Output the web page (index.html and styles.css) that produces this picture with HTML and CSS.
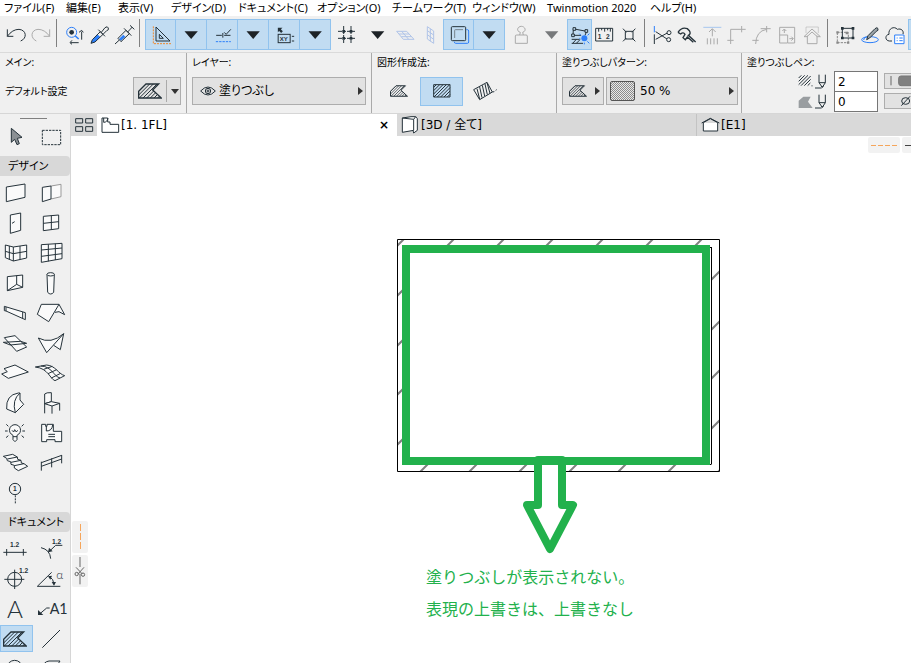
FILE: index.html
```html
<!DOCTYPE html>
<html lang="ja">
<head>
<meta charset="utf-8">
<meta name="viewport" content="width=device-width, initial-scale=1">
<title>[1. 1FL]</title>
<link rel="stylesheet" href="styles.css">
</head>
<body>
<svg class="sprite" aria-hidden="true">
  <clipPath id="fill-clip"><path d="M2 44V24L24 2H62L44 20 70 44z"/></clipPath>
  <symbol id="fill" viewBox="0 0 72 46">
    <path d="M2 44V24L24 2H62L44 20 70 44z" stroke-width="4"/>
    <path clip-path="url(#fill-clip)" stroke-width="3" d="M-20 46L26 0M-9 46L37 0M2 46L48 0M13 46L59 0M24 46L70 0M35 46L81 0M46 46L92 0M57 46L103 0"/>
  </symbol>
  <symbol id="down" viewBox="0 0 93 93"><path d="M27 37H67L47 60z" fill="currentColor" stroke="none"/></symbol>
  <symbol id="pen" viewBox="0 0 33 45"><path d="M12 2V26L22 40 31 26V2M12 26H31M0 42H20M19 36L22 40 25 36"/></symbol>
</svg>

<nav class="menu">
  <a href="#">ファイル(F)</a><a href="#">編集(E)</a><a href="#">表示(V)</a><a href="#">デザイン(D)</a><a href="#">ドキュメント(C)</a><a href="#">オプション(O)</a><a href="#">チームワーク(T)</a><a href="#">ウィンドウ(W)</a><a href="#">Twinmotion 2020</a><a href="#">ヘルプ(H)</a>
</nav>

<div class="toolbar">
  <button aria-label="元に戻す"><svg viewBox="0 0 75 93"><path d="M10 31V52H28M10 52Q25 31 45 31C68 33 70 58 50 66"/></svg></button>
  <button class="off" aria-label="やり直し"><svg viewBox="0 0 75 93"><path d="M62 31V52H44M62 52Q47 31 27 31C4 33 4 58 22 66"/></svg></button>
  <span class="sep"></span>
  <button aria-label="検索"><svg viewBox="0 0 75 93"><circle class="blue" cx="29" cy="40" r="15"/><circle class="solid" cx="29" cy="40" r="7"/><path class="blue" stroke-width="5" d="M40 51L50 60"/><path d="M59 62V38M51 40L59 34 64 40M50 71H26M30 64L24 71 30 76"/></svg></button>
  <button aria-label="ピックアップ"><svg viewBox="0 0 75 93"><path class="bluefill" d="M12 73L16 62 31 46 40 54 24 69z"/><path d="M12 73L16 62 40 38 48 46 24 69zM34 32L54 52M43 40L54 26Q62 20 64 27T59 35L48 46"/></svg></button>
  <button aria-label="注入"><svg viewBox="0 0 75 93"><path class="bluefill" d="M21 60L34 47 40 53 27 65z"/><path d="M9 75L21 64M18 58L42 34 52 44 27 68zM36 28L58 50M47 39L61 24M54 19L67 31"/></svg></button>
  <span class="sep"></span>
  <button class="wide on" aria-label="ガイドライン"><svg viewBox="0 0 93 93"><path d="M33 24V66H75zM43 46V58H55z"/><path class="orange" stroke-dasharray="6 3" d="M25 22V74H79"/></svg></button>
  <button class="wide on" aria-label="ガイドラインのオプション"><svg><use href="#down"/></svg></button>
  <button class="wide on" aria-label="スナップガイド"><svg viewBox="0 0 93 93"><path d="M29 49H46M53 49H72M49 42V56M53 40L59 46 73 31"/><path class="blue" stroke-dasharray="7 3" d="M28 68H73"/></svg></button>
  <button class="wide on" aria-label="スナップのオプション"><svg><use href="#down"/></svg></button>
  <button class="wide on" aria-label="座標"><svg viewBox="0 0 93 93"><path class="solid" d="M28 26H42L37 31 43 37 38 42 32 36 28 40z"/><rect x="29" y="46" width="36" height="25"/><text x="34" y="65" font-size="18">XY</text><path d="M70 52H77M70 66H77"/></svg></button>
  <button class="wide on" aria-label="座標のオプション"><svg><use href="#down"/></svg></button>
  <button class="wide" aria-label="グリッド"><svg viewBox="0 0 93 93"><path stroke-dasharray="12 3 9 3" d="M21 37H75M21 58H75M38 21V75M60 21V75"/><path stroke-width="8" d="M34 37H42M56 37H64M34 58H42M56 58H64"/></svg></button>
  <button class="wide" aria-label="グリッドのオプション"><svg><use href="#down"/></svg></button>
  <button class="pale" aria-label="編集面"><svg viewBox="0 0 75 93"><path d="M11 37H41L63 61H31zM26 37L47 61M18 45H48M25 53H55"/></svg></button>
  <button class="pale" aria-label="垂直面"><svg viewBox="0 0 75 93"><path d="M28 23L47 36V73L28 60zM37 29V67M28 35L47 48M28 47L47 61"/></svg></button>
  <button class="wide on" aria-label="グループ"><svg viewBox="0 0 93 93"><rect x="25" y="23" width="43" height="42" rx="3"/><path d="M35 57V34Q35 32 37 32H60" stroke="#77848e"/><path class="blue" d="M70 32H73Q77 32 77 36V69Q77 73 73 73H38Q34 73 34 68"/></svg></button>
  <button class="wide on" aria-label="グループのオプション"><svg><use href="#down"/></svg></button>
  <button class="wide off" aria-label="重力"><svg viewBox="0 0 93 93"><path d="M31 51Q31 48 35 48H63Q67 48 67 51V73H31zM44 48L46 40C32 36 38 22 49 22S66 36 53 40L55 48"/></svg></button>
  <button class="wide off dark" aria-label="重力のオプション"><svg><use href="#down"/></svg></button>
  <button class="on" aria-label="選択表示"><svg viewBox="0 0 75 93"><path d="M22 30L59 37 54 49M19 31L18 49 42 49M14 61H38M14 73H48M17 73L28 61M28 73L39 62"/><path fill="#c1dcf2" d="M18 26H26V34H18zM54 32H62V40H54zM14 45H22V53H14z"/><circle class="bluefill" cx="52" cy="58" r="9"/><path class="blue" d="M37 44L42 49M67 44L62 49M67 73L61 67M37 58H40M52 71V76"/></svg></button>
  <button aria-label="寸法"><svg viewBox="0 0 75 93"><path d="M11 28H62V66H11zM20 28V38M29 28V34M38 28V38M47 28V34M55 28V38"/><text x="17" y="61" font-size="20">1</text><text x="42" y="61" font-size="20">2</text></svg></button>
  <button aria-label="解除"><svg viewBox="0 0 75 93"><path d="M25 37H48V60H25zM18 29L28 40M55 29L45 40M18 67L28 57M55 67L45 57"/></svg></button>
  <span class="sep"></span>
  <button aria-label="切断"><svg viewBox="0 0 75 93"><path class="blue" d="M13 21V40"/><path d="M13 46V75M17 38L51 60M17 61L52 42"/><circle cx="57" cy="41" r="6"/><circle cx="56" cy="62" r="6"/></svg></button>
  <button aria-label="分割"><svg viewBox="0 0 75 93"><path d="M9 40Q20 23 37 29L43 35Q49 45 40 49L62 69M9 40L17 45Q25 38 30 46L24 56 31 62 37 54 55 70" stroke-width="4"/></svg></button>
  <button class="off" aria-label="調整"><svg viewBox="0 0 75 93"><path class="paleblue" d="M10 25H64"/><path d="M37 52V30M27 39L37 29 47 39M22 58V76M32 58V76M42 58V76M52 58V76"/></svg></button>
  <button class="off" aria-label="交差"><svg viewBox="0 0 75 93"><path d="M17 75V31H62M50 21V40M7 64H26"/></svg></button>
  <button class="off" aria-label="フィレット"><svg viewBox="0 0 75 93"><path d="M17 75Q18 36 50 31M32 29H62M50 21V40M7 64H26"/></svg></button>
  <button class="off" aria-label="サイズ変更"><svg viewBox="0 0 75 93"><path d="M14 48V25H59V72H39M14 48H38V72H14zM28 42V31M22 36L28 30 34 36M43 59H54M49 53L55 59 49 65"/></svg></button>
  <button class="off" aria-label="屋根で切り取り"><svg viewBox="0 0 75 93"><path opacity=".5" d="M18 42V24H55V42"/><path d="M22 50V74H51V50M12 53L36 30 61 53H52L36 39 21 53z"/></svg></button>
  <span class="sep"></span>
  <button aria-label="変更"><svg viewBox="0 0 75 93"><path stroke="#888" stroke-dasharray="7 3" d="M13 40H46V71H13z"/><path d="M28 28H60V57H28z"/><path stroke-width="8" d="M24 28H32M56 28H64M24 57H32M56 57H64"/><path stroke="#888" stroke-width="7" d="M10 40H17M10 71H17M42 71H49M38 42H45"/></svg></button>
  <button aria-label="注釈"><svg viewBox="0 0 75 93"><ellipse class="blue" cx="36" cy="62" rx="25" ry="9"/><path class="blue" d="M17 63Q17 53 29 53"/><path fill="#9aa3a8" d="M26 62L30 50 51 29Q58 23 60 29T55 37L35 57z"/></svg></button>
  <button aria-label="クラウド"><svg viewBox="0 0 75 93"><path d="M27 66H19C5 65 6 47 18 46C15 28 34 20 43 31C55 27 63 36 60 45"/><path class="blue" fill="#fff" d="M35 48H63V74H35zM41 57H44M49 57H59M41 65H44M49 65H59"/></svg></button>
  <button class="on" aria-label="その他"></button>
</div>

<div class="infobar">
  <section class="main-info">
    <h2>メイン:</h2>
    <div class="row"><span class="small">デフォルト設定</span>
      <button class="box default" aria-label="設定"><svg class="fill-l"><use href="#fill"/></svg><i></i><b class="tri-down"></b></button></div>
  </section>
  <section>
    <h2>レイヤー:</h2>
    <div class="row"><button class="box layer"><svg class="eye" viewBox="0 0 48 30"><path d="M2 15Q24-9 46 15Q24 39 2 15z"/><circle cx="24" cy="15" r="8"/><circle cx="24" cy="15" r="3"/></svg><span>塗りつぶし</span><b class="tri"></b></button></div>
  </section>
  <section class="geometry">
    <h2>図形作成法:</h2>
    <div class="row">
      <button aria-label="多角形"><svg class="fill-s"><use href="#fill"/></svg></button>
      <button class="on" aria-label="矩形"><svg class="rect-fill" viewBox="0 0 54 42"><path d="M2 2H51V39H2zM2 10L10 2M2 20L20 2M2 30L30 2M3 39L40 2M13 39L50 2M23 39L51 11M33 39L51 21M43 39L51 31"/></svg></button>
      <button aria-label="回転矩形"><svg class="rot-fill" viewBox="0 0 72 60"><path d="M2 26L42 4 58 33 20 56zM12 23L20 54M20 18L27 50M28 13L35 45M36 9L43 41M42 5L51 37M58 33L64 32M68 28L71 26" stroke-width="3"/></svg></button>
    </div>
  </section>
  <section class="pattern">
    <h2>塗りつぶしパターン:</h2>
    <div class="row"><button class="box kind" aria-label="種類"><svg class="fill-s"><use href="#fill"/></svg><b class="tri"></b></button><button class="box percent"><span class="swatch"></span><span>50 %</span><b class="tri"></b></button></div>
  </section>
  <section class="pens">
    <h2>塗りつぶしペン:</h2>
    <div class="pen-grid">
      <label for="line-pen" aria-label="線ペン"><svg class="lines" viewBox="0 0 45 45"><path d="M2 12L10 4M2 22L20 4M2 32L30 4M9 35L38 6M19 35L38 16M29 35L37 27M42 34V37"/></svg><svg class="pen"><use href="#pen"/></svg></label>
      <input id="line-pen" value="2">
      <button class="box" aria-label="線の色"><svg class="wide-pen" viewBox="0 0 84 48"><path d="M18 9V37" stroke="#666"/><rect x="41" y="9" width="50" height="29" rx="7" fill="#808080" stroke="#777"/></svg></button>
      <label for="back-pen" aria-label="背景ペン"><svg class="lines" viewBox="0 0 45 45"><path fill="#999da0" stroke="none" d="M2 42V20L16 8H38L30 23 44 42z"/></svg><svg class="pen"><use href="#pen"/></svg></label>
      <input id="back-pen" value="0">
      <button class="box" aria-label="背景なし"><svg class="wide-pen" viewBox="0 0 84 48"><ellipse cx="62" cy="24" rx="12" ry="10"/><path d="M49 38L75 10"/></svg></button>
    </div>
  </section>
</div>

<div class="workspace">
  <aside class="toolbox">
    <div class="grip"></div>
    <div class="tools top">
      <button aria-label="矢印"><svg viewBox="0 0 99 81"><path fill="#8b9094" d="M34 16V58L44 49 51 65 58 62 52 46 66 43z"/></svg></button>
      <button aria-label="矩形選択"><svg viewBox="0 0 99 81"><path stroke-dasharray="7 3" d="M22 22H77V65H22z"/></svg></button>
    </div>
    <h3>デザイン</h3>
    <div class="tools">
      <button aria-label="壁"><svg viewBox="0 0 99 81"><path class="w" d="M19 24L75 15V55L19 68z"/></svg></button>
      <button aria-label="コンポーネント"><svg viewBox="0 0 99 81"><path stroke="#999" class="w" d="M48 21L78 16V53L48 60"/><path class="w" d="M22 25L48 21V60L22 68z"/></svg></button>
      <button aria-label="ドア"><svg viewBox="0 0 99 81"><path class="w" d="M31 18L62 12V64L31 73zM36 43L44 38"/></svg></button>
      <button aria-label="窓"><svg viewBox="0 0 99 81"><path class="w" d="M25 22L71 18V59L25 65zM49 20V62M25 43L71 38"/></svg></button>
      <button aria-label="カーテンウォール"><svg viewBox="0 0 99 81"><path class="w" d="M16 18L40 24 80 18V57L40 66 16 56zM28 21V61M40 24V66M60 21V62M16 37L40 44 80 37"/></svg></button>
      <button aria-label="外装"><svg viewBox="0 0 99 81"><path class="w" d="M19 17L81 13V59L19 70zM40 16V67M61 14V63M19 33L81 27M19 52L81 44"/></svg></button>
      <button aria-label="開口"><svg viewBox="0 0 99 81"><path class="w" d="M22 23L68 18V55L22 65zM50 20V46M22 65L50 46 68 55"/></svg></button>
      <button aria-label="柱"><svg viewBox="0 0 99 81"><path class="w" d="M36 16L38 70Q47 80 56 70L58 16"/><ellipse class="w" cx="47" cy="16" rx="11" ry="5"/></svg></button>
      <button aria-label="梁"><svg viewBox="0 0 99 81"><path class="w" d="M13 22L76 41V62L18 36 13 35zM18 24V36M68 39V58"/></svg></button>
      <button aria-label="屋根"><svg viewBox="0 0 99 81"><path class="w" d="M72 16L89 47 72 38 60 40M19 16H72L41 68 7 46z"/></svg></button>
      <button aria-label="シェル"><svg viewBox="0 0 99 81"><path class="w" d="M13 26L45 20 80 54 50 67z"/><path d="M10 40L62 37 80 43 31 48z"/></svg></button>
      <button aria-label="メッシュ屋根"><svg viewBox="0 0 99 81"><path class="w" d="M86 14L76 62 56 49M10 27Q48 47 86 14L35 71z"/></svg></button>
      <button aria-label="スラブ"><svg viewBox="0 0 99 81"><path class="w" d="M5 45L22 38 12 29 45 18 85 39 25 58z"/></svg></button>
      <button aria-label="メッシュ"><svg viewBox="0 0 99 81"><path class="w" d="M1 24L35 18C62 20 70 45 89 50L60 65C45 60 40 28 1 24zM18 21C50 22 56 52 75 57M26 31L52 22M39 44L65 32M49 57L77 43"/></svg></button>
      <button aria-label="モルフ"><svg viewBox="0 0 99 81"><path class="w" d="M20 60Q17 18 55 12H60V33L71 46 46 71zM46 71Q35 33 60 12"/></svg></button>
      <button aria-label="オブジェクト"><svg viewBox="0 0 99 81"><path class="w" d="M29 73V15Q34 10 49 11V38L29 44"/><path class="w" d="M29 44L49 38 74 43 51 51zM51 51V74M74 43V65"/></svg></button>
      <button aria-label="ランプ"><svg viewBox="0 0 99 81"><path class="w" d="M39 49C21 40 28 17 45 17S69 40 51 49V62L45 68 39 62zM39 53H51"/><path d="M36 34L41 39 44 32 49 39 53 34M15 36H23M67 36H75M19 16L25 22M71 16L65 22M18 56L25 50M72 56L65 50"/></svg></button>
      <button aria-label="ゾーン"><svg viewBox="0 0 99 81"><path class="w" d="M20 16H32V22H36V16H55V37H80V68H60V62H35V68H20z"/><path d="M34 22V36Q51 36 53 18M40 46H60M40 53H60"/></svg></button>
      <button aria-label="階段"><svg viewBox="0 0 99 81"><path class="w" d="M10 22L38 16 52 24 53 31 63 34 64 42 72 44 83 52 55 65 43 57V49L33 46 32 38 22 35 20 28zM22 30L52 24M33 40L63 34M43 50L72 44"/></svg></button>
      <button aria-label="手摺り"><svg viewBox="0 0 99 81"><path d="M19 38V65M50 28V55M80 18V43M19 41L80 19M19 52L80 30"/></svg></button>
      <button aria-label="通り芯"><svg viewBox="0 0 99 81"><circle cx="45" cy="30" r="17"/><text x="39" y="37" font-size="20">1</text><path stroke-dasharray="6 3" d="M46 49V75"/></svg></button>
    </div>
    <h3>ドキュメント</h3>
    <div class="tools">
      <button aria-label="線寸法"><svg viewBox="0 0 99 81"><path d="M10 52H80M20 42V62M70 42V62"/><text x="30" y="37" font-size="20">1.2</text></svg></button>
      <button aria-label="半径寸法"><svg viewBox="0 0 99 81"><text x="51" y="26" font-size="20">1.2</text><path d="M82 31H62L41 51M18 38Q45 44 47 71"/><path class="solid" d="M39 52L42 38 53 49z"/></svg></button>
      <button aria-label="高さ寸法"><svg viewBox="0 0 99 81"><circle cx="44" cy="43" r="21"/><path d="M13 43H73M44 14V72"/><text x="57" y="23" font-size="20">1.2</text></svg></button>
      <button aria-label="角度寸法"><svg viewBox="0 0 99 81"><path d="M50 22L7 64H76M43 34Q56 42 57 58"/><path class="solid" d="M39 34L51 32 46 44zM50 51H63L57 62z"/><text class="light" x="64" y="42" font-size="36">α</text></svg></button>
      <button aria-label="テキスト"><svg viewBox="0 0 99 81"><text class="light" x="21" y="70" font-size="73">A</text></svg></button>
      <button aria-label="ラベル"><svg viewBox="0 0 99 81"><path d="M44 39H35L15 56"/><path class="solid" d="M9 45V60H25z"/><text class="regular" x="44" y="57" font-size="43">A1</text></svg></button>
      <button class="on" aria-label="塗りつぶし"><svg class="fill-l"><use href="#fill"/></svg></button>
      <button aria-label="線"><svg viewBox="0 0 99 81"><path d="M22 68L75 15"/></svg></button>
      <button aria-label="円"><svg viewBox="0 0 99 81"><circle cx="44" cy="39" r="23"/></svg></button>
      <button aria-label="ポリライン"><svg viewBox="0 0 99 81"><path d="M22 40Q25 20 42 18H75L60 40"/></svg></button>
    </div>
  </aside>

  <main>
    <div class="tabs">
      <button class="overview" aria-label="タブ一覧"><svg viewBox="0 0 57 45"><path d="M2 2H23V15H2zM32 2H53V15H32zM2 26H23V40H2zM32 26H53V40H32z"/></svg></button>
      <div class="tab active"><svg viewBox="0 0 57 48"><path fill="#fff" d="M3 3H20V15H27V22H53V46H3zM8 3V16Q19 16 21 3"/></svg><span>[1. 1FL]</span><button class="close" aria-label="閉じる">×</button></div>
      <div class="tab"><svg viewBox="0 0 57 54"><path fill="#fff" d="M4 6L38 10V43L4 49zM4 6L30 2H44L49 8V43L38 51 36 43M38 10L44 2"/></svg><span>[3D / 全て]</span></div>
      <div class="tab"><svg viewBox="0 0 57 48"><path fill="#fff" d="M2 18L28 4 55 18M7 17V42H50V17L28 5z"/></svg><span>[E1]</span></div>
    </div>
    <div class="canvas">
      <div class="dock right"><span><i></i></span><span><i></i></span></div>
      <div class="dock left"><span><i></i></span><span><svg viewBox="0 0 48 96"><path d="M24 6V36M24 56V88M12 37L31 57M36 37L18 57"/><circle cx="14" cy="57" r="5"/><circle cx="33" cy="59" r="5"/></svg></span></div>
      <svg class="plan" viewBox="397 239 323 318" role="img" aria-label="平面図">
        <clipPath id="wall"><rect x="398" y="240" width="321" height="231"/></clipPath>
        <g clip-path="url(#wall)" stroke="#808080" stroke-width="2">
          <path d="M384 259l60-60M384 309l110-110M384 359l160-160M384 408l209-209M384 458l259-259M384 508l309-309M394 547l340-340M444 547l300-300M494 547l300-300M543 547l300-300M593 547l300-300M643 547l300-300"/>
        </g>
        <path d="M402 247H711V464H402z" fill="#fff" stroke="none"/>
        <path d="M397.500 239.500H719.500V471.500H397.500zM711.500 247V464.500M709 247.500H711M709 464.500H711" stroke="#000" stroke-width="1" fill="none"/>
        <rect x="406" y="249" width="300" height="212" fill="#fff" stroke="#22b14c" stroke-width="8"/>
        <path d="M538 460V505H527L550 549 573 505H562V460z" fill="#fff" stroke="#22b14c" stroke-width="8" stroke-linejoin="round"/>
        <path d="M542 461H558" stroke="#22b14c" stroke-width="8"/>
      </svg>
      <p class="note">塗りつぶしが表示されない。<br>表現の上書きは、上書きなし</p>
    </div>
  </main>
</div>
</body>
</html>
```
FILE: styles.css
```css
* { box-sizing: border-box; }

body {
  margin: 0;
  height: 100vh;
  display: flex;
  flex-direction: column;
  overflow: hidden;
  background: #fff;
  color: #000;
  font: 12px/16px "Noto Sans", "Noto Sans CJK JP", sans-serif;
  font-feature-settings: "palt";
}

h2, h3, p { margin: 0; font-weight: 400; }

button {
  display: flex;
  align-items: center;
  justify-content: center;
  flex: none;
  margin: 0;
  padding: 0;
  border: 0;
  background: none;
  color: inherit;
  font: inherit;
  font-feature-settings: inherit;
}

svg {
  display: block;
  flex: none;
  fill: none;
  stroke: #25323a;
  stroke-width: 3;
}

svg text {
  fill: #25323a;
  stroke: none;
  font-family: "Liberation Sans", sans-serif;
  font-weight: 700;
}

svg .light { font-family: Lato, sans-serif; font-weight: 300; }
svg .regular { font-family: Lato, sans-serif; font-weight: 400; }
.sprite { position: absolute; width: 0; height: 0; }
.solid { fill: #25323a; stroke: none; }
.w { fill: #fafafa; }
.blue { stroke: #2d7ff9; }
.bluefill { fill: #2d7ff9; stroke: none; }
.orange { stroke: #f08a30; }
.paleblue { stroke: #a6c6ee; }

/* menu */
.menu {
  flex: none;
  display: grid;
  grid-template-columns: 62px 52px 53px 67px 79px 75px 80px 75px 103px auto;
  height: 16px;
  padding-left: 4px;
  font-size: 11px;
}

.menu a { color: #000; text-decoration: none; white-space: nowrap; }

/* toolbar */
.toolbar {
  flex: none;
  display: flex;
  height: 37px;
  padding: 3px 0 3px 4px;
  overflow: hidden;
  background: #f0f0f0;
  border-bottom: 1px solid #dadada;
}

.toolbar button { width: 25px; height: 31px; }
.toolbar button.wide { width: 31px; }
.toolbar svg { width: 100%; height: 31px; color: #1d2226; }
.toolbar .on, .geometry .on, .tools .on { background: #c1dcf2; border: 1px solid #91c3ee; }
.toolbar .on svg { margin: 0 -1px; width: calc(100% + 2px); }
.toolbar .on + .on { border-left-width: 0; }
.toolbar .off svg { stroke: #aaa; }
.toolbar .dark svg { color: #77797b; }
.toolbar .pale svg { stroke: #b0c4e8; }
.sep { flex: none; width: 8px; border-left: 2px solid transparent; }
.sep::before { content: ""; display: block; width: 1px; height: 28px; background: #808080; }

/* info bar */
.infobar {
  flex: none;
  display: grid;
  grid-template-columns: 187px 185px 185px 185px 1fr;
  height: 61px;
  background: #f0f0f0;
  border-bottom: 1px solid #d6d6d6;
}

.infobar section { min-width: 0; padding: 0 5px; border-right: 1px solid #aaa; }
.infobar section:last-child { border: 0; padding-right: 0; overflow: hidden; }
.infobar h2 { height: 23px; font-size: 10px; line-height: 18px; }
.small { font-size: 10px; }
.row { display: flex; align-items: center; gap: 2px; height: 30px; }
.main-info .row { justify-content: space-between; }
.box { height: 28px; border: 1px solid #adadad; background: #e2e2e2; }
.default { width: 48px; gap: 4px; }
.default i { width: 1px; height: 22px; background: #aaa; }
.tri-down { border: 4px solid transparent; border-top: 5px solid #333; border-bottom: 0; }
.tri { margin-left: auto; border: 4px solid transparent; border-left: 5px solid #333; border-right: 0; }
.default svg { margin-left: 3px; }
.fill-l { width: 24px; height: 16px; }
.fill-s { width: 18px; height: 14px; }
.layer { flex: 1; padding: 0 2px 0 7px; gap: 3px; }
.eye { width: 16px; height: 12px; }
.geometry .row { gap: 0; }
.geometry button { width: 43px; height: 29px; }
.rect-fill { width: 18px; height: 14px; }
.rot-fill { width: 24px; height: 20px; }
.infobar .pattern { padding-right: 3px; }
.kind { width: 42px; padding: 0 3px 0 6px; }
.percent { flex: 1; padding: 0 3px; gap: 5px; font-family: "DejaVu Sans", sans-serif; }

.swatch {
  width: 25px;
  height: 20px;
  border: 1px solid #555;
  border-radius: 2px;
  background: repeating-conic-gradient(#8c8c8c 0 25%, #e8e8e8 0 50%) 0 0 / 2px 2px;
}

.pens h2 { height: 18px; }
.pen-grid { display: grid; grid-template-columns: 30px 44px 1fr; grid-auto-rows: 20px; gap: 0 6px; padding-left: 51px; align-items: center; }
.pen-grid label { display: flex; gap: 2px; }
.lines { width: 15px; height: 15px; }
.pen { width: 11px; height: 15px; }
.pen-grid input { width: 44px; height: 21px; padding: 0 3px; border: 1px solid #767676; background: #fff; font: 12px "DejaVu Sans", sans-serif; align-self: start; }
.pen-grid .box { width: 60px; height: 16px; justify-content: flex-start; }
.wide-pen { width: 28px; height: 16px; }

/* toolbox */
.workspace { flex: 1; display: flex; min-height: 0; }
.toolbox { flex: none; width: 71px; overflow: hidden; background: #f0f0f0; border-right: 1px solid #d6d6d6; }
.grip { width: 27px; height: 1px; margin: 4px 0 4px 20px; background: #808080; }
.tools { display: grid; grid-template-columns: 33px 33px; grid-auto-rows: 27px; gap: 3px 2px; margin: 3px 0 6px; }
.tools.top { margin: 0 0 6px; }
.tools button { height: 27px; }
.tools svg { width: 33px; height: 27px; }
.tools .on { justify-content: flex-start; padding-left: 2px; }
.tools svg.fill-l { width: 24px; height: 16px; }
.toolbox h3 { height: 20px; padding-left: 8px; border-radius: 0 4px 4px 0; background: #d8d8d8; font-size: 11px; line-height: 20px; white-space: nowrap; }

/* tabs and drawing area */
main { flex: 1; min-width: 0; display: flex; flex-direction: column; }
.tabs { flex: none; display: grid; grid-template-columns: 26px 300fr 300fr 214fr; height: 22px; background: #d9d9d9; font-family: "DejaVu Sans", "Noto Sans CJK JP", sans-serif; }
.overview svg { width: 19px; height: 15px; }
.tab { display: flex; align-items: center; gap: 1px; min-width: 0; padding-left: 4px; border-right: 1px solid #c3c3c3; }
.tab:last-child { border: 0; }
.tab svg { width: 19px; height: 18px; }
.active { background: #fff; border: 0; }
.close { width: 16px; height: 16px; margin: 0 5px 0 auto; font-weight: 700; }
.canvas { position: relative; flex: 1; overflow: hidden; }
.plan { position: absolute; left: 326px; top: 103px; width: 323px; height: 318px; }
.note { position: absolute; left: 355px; top: 424px; color: #22b14c; font-size: 16px; line-height: 32px; white-space: nowrap; font-family: "Noto Sans CJK JP", sans-serif; font-feature-settings: normal; }
.dock { position: absolute; display: flex; gap: 2px; }
.dock span { display: flex; align-items: center; justify-content: center; width: 32px; height: 16px; border-radius: 2px; background: #f2f2f2; }
.dock.right { top: 1px; right: -23px; }
.dock.right i { width: 26px; height: 1px; background: repeating-linear-gradient(90deg, #f5a55a 0 5px, transparent 5px 7px); }
.dock.right span + span i { background: #444; }
.dock.left { flex-direction: column; left: 1px; top: 385px; }
.dock.left span { width: 16px; height: 32px; }
.dock.left i { width: 1px; height: 26px; background: repeating-linear-gradient(#f5a55a 0 7px, transparent 7px 9px); }
.dock svg { width: 16px; height: 32px; stroke: #666; }
```
